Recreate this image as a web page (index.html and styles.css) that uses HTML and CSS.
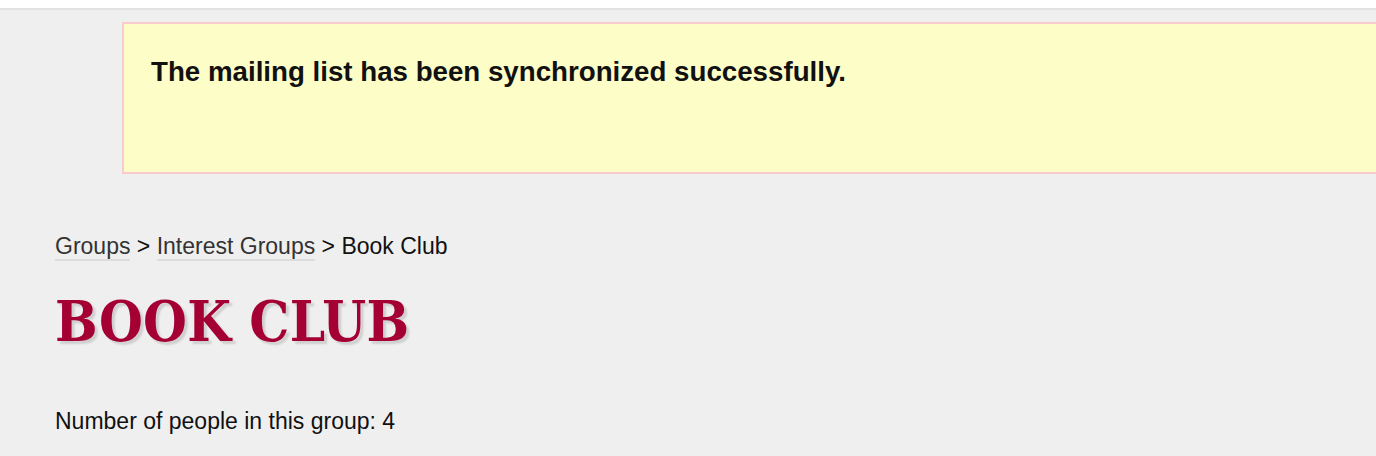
FILE: index.html
```html
<!DOCTYPE html>
<html lang="en">
<head>
  <meta charset="UTF-8" />
  <title>Book Club</title>
  <link rel="stylesheet" href="styles.css">
</head>
<body>
  <div class="topbar"></div>

  <div class="page">
    <!-- Mensagem de status -->
    <div class="notice">
      <p>The mailing list has been synchronized successfully.</p>
    </div>

    <div class="content">
      <nav class="breadcrumb">
        <a href="#">Groups</a> &gt; <a href="#">Interest Groups</a> &gt; Book Club
      </nav>

      <h1 class="group-title">BOOK CLUB</h1>

      <p class="group-count">Number of people in this group: 4</p>
    </div>
  </div>
</body>
</html>
```

FILE: styles.css
```css
* {
  margin: 0;
  padding: 0;
  box-sizing: border-box;
}

html, body {
  height: 100%;
}

body {
  font-family: "Liberation Sans", Arial, sans-serif;
  background: #efefef;
  color: #111;
}

.topbar {
  height: 10px;
  background: #fff;
  border-bottom: 2px solid #e2e2e2;
}

.page {
  padding-top: 12px;
}

.notice {
  margin-left: 122px;
  height: 152px;
  padding: 32px 27px;
  background: #fdfdc8;
  border: 2px solid #f8cccc;
  border-right: none;
}

.notice p {
  font-size: 27.7px;
  line-height: 32px;
  font-weight: bold;
  color: #111;
}

.content {
  padding: 58px 55px 0;
}

.breadcrumb {
  font-size: 23px;
  line-height: 28px;
  color: #111;
}

.breadcrumb a {
  color: #333;
  text-decoration: none;
  border-bottom: 2px solid #dcdcdc;
}

.group-title {
  margin-top: 29px;
  font-family: "DejaVu Serif Condensed", "DejaVu Serif", serif;
  font-stretch: condensed;
  font-size: 56px;
  line-height: 64px;
  font-weight: bold;
  letter-spacing: 0.3px;
  color: #a50034;
  text-shadow: 3px 3px 2px #cfcfcf;
}

.group-count {
  margin-top: 54px;
  font-size: 23px;
  line-height: 28px;
}
```
